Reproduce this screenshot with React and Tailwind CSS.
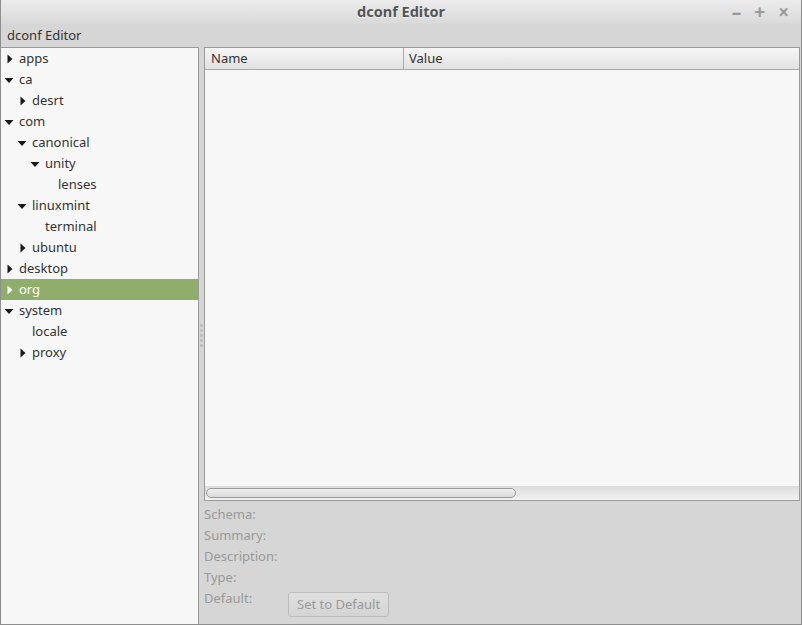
import React from 'react';

const tree = [
  { label: 'apps', depth: 0, arrow: 'right' },
  { label: 'ca', depth: 0, arrow: 'down' },
  { label: 'desrt', depth: 1, arrow: 'right' },
  { label: 'com', depth: 0, arrow: 'down' },
  { label: 'canonical', depth: 1, arrow: 'down' },
  { label: 'unity', depth: 2, arrow: 'down' },
  { label: 'lenses', depth: 3, arrow: null },
  { label: 'linuxmint', depth: 1, arrow: 'down' },
  { label: 'terminal', depth: 2, arrow: null },
  { label: 'ubuntu', depth: 1, arrow: 'right' },
  { label: 'desktop', depth: 0, arrow: 'right' },
  { label: 'org', depth: 0, arrow: 'right', selected: true },
  { label: 'system', depth: 0, arrow: 'down' },
  { label: 'locale', depth: 1, arrow: null },
  { label: 'proxy', depth: 1, arrow: 'right' },
];

const Arrow = ({ dir, light }) => {
  const fill = light ? '#ffffff' : '#1a1a1a';
  if (dir === 'right') {
    return (
      <svg width="10" height="10" viewBox="0 0 10 10">
        <polygon points="3.5,0.5 8.5,5 3.5,9.5" fill={fill} />
      </svg>
    );
  }
  return (
    <svg width="10" height="10" viewBox="0 0 10 10">
      <polygon points="0.5,3 9.5,3 5,8" fill={fill} />
    </svg>
  );
};

function TreeRow({ item }) {
  return (
    <div
      className={`h-[21px] flex items-center ${item.selected ? 'bg-[#8fae6b] text-white' : 'text-[#333]'}`}
      style={{ paddingLeft: 3 + item.depth * 13 }}
    >
      <span className="w-[13px] flex items-center justify-start">
        {item.arrow && <Arrow dir={item.arrow} light={item.selected} />}
      </span>
      <span className="ml-[2px]">{item.label}</span>
    </div>
  );
}

const fields = ['Schema:', 'Summary:', 'Description:', 'Type:'];

export default function App() {
  return (
    <div
      className="w-[802px] h-[625px] bg-[#d6d6d6] border border-[#8e8e8e] border-t-0 flex flex-col text-[13px]"
      style={{ fontFamily: '"Noto Sans", "DejaVu Sans", sans-serif' }}
    >
      <div className="h-[24px] relative flex items-center justify-center bg-gradient-to-b from-[#ececec] to-[#d9d9d9]">
        <span className="font-bold text-[14.5px] text-[#555]" style={{ textShadow: '0 1px 0 #f4f4f4' }}>dconf Editor</span>
        <div className="absolute right-[12px] top-[3px] flex items-center gap-[13px] text-[#9a9a9a] font-bold text-[19px] leading-none">
          <span>–</span>
          <span>+</span>
          <span>×</span>
        </div>
      </div>
      <div className="h-[23px] flex items-center px-[6px] pt-[1px] text-[#333]">dconf Editor</div>
      <div className="flex-1 flex min-h-0">
        <div className="w-[198px] bg-[#f7f7f7] border border-[#9a9a9a] border-l-0 border-b-0">
          {tree.map(item => <TreeRow key={item.label} item={item} />)}
        </div>
        <div className="w-[5px] flex flex-col items-center justify-center gap-[2px]">
          {[0, 1, 2, 3, 4].map(i => (
            <span key={i} className="w-[3px] h-[3px] rounded-full bg-[#b8b8b8]" />
          ))}
        </div>
        <div className="flex-1 flex flex-col pr-[1px]">
          <div className="h-[454px] bg-[#f7f7f7] border border-[#9a9a9a] flex flex-col">
            <div className="h-[22px] flex bg-gradient-to-b from-[#f6f6f6] to-[#e2e2e2] border-b border-[#aaaaaa] text-[#333]">
              <div className="w-[199px] border-r border-[#aaaaaa] flex items-center pl-[6px]">Name</div>
              <div className="flex-1 flex items-center pl-[5px]">Value</div>
            </div>
            <div className="flex-1" />
            <div className="h-[14px] bg-gradient-to-b from-[#dcdcdc] to-[#f2f2f2] flex items-center px-[1px]">
              <div className="w-[310px] h-[10px] rounded-full border border-[#9a9a9a] bg-gradient-to-b from-[#f0f0f0] to-[#dadada]" />
            </div>
          </div>
          <div className="flex flex-col text-[#999] pt-[3px]">
            {fields.map(f => (
              <div key={f} className="h-[21px] flex items-center">{f}</div>
            ))}
            <div className="flex items-start h-[32px]">
              <span className="w-[84px] h-[21px] flex items-center">Default:</span>
              <button className="mt-[4px] h-[25px] px-[8px] rounded-[3px] border border-[#bdbdbd] bg-gradient-to-b from-[#e0e0e0] to-[#d4d4d4] text-[#999]">
                Set to Default
              </button>
            </div>
          </div>
        </div>
      </div>
    </div>
  );
}
